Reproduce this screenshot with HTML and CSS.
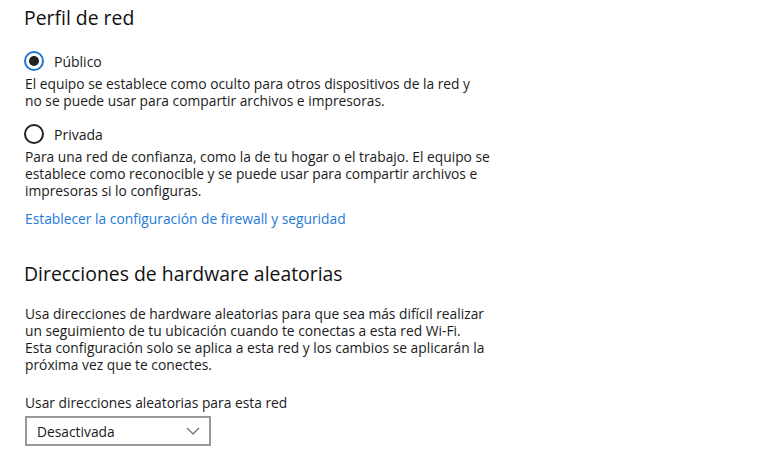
FILE: index.html
```html
<!DOCTYPE html>
<html lang="es">
<head>
<meta charset="utf-8">
<link rel="stylesheet" href="styles.css">
</head>
<body>
<main class="page">
  <h1 class="title">Perfil de red</h1>
  <div class="option">
    <span class="radio checked"><span class="dot"></span></span>
    <span class="opt-label">Público</span>
  </div>
  <p class="desc">El equipo se establece como oculto para otros dispositivos de la red y<br>no se puede usar para compartir archivos e impresoras.</p>
  <div class="option second">
    <span class="radio"></span>
    <span class="opt-label">Privada</span>
  </div>
  <p class="desc">Para una red de confianza, como la de tu hogar o el trabajo. El equipo se<br>establece como reconocible y se puede usar para compartir archivos e<br>impresoras si lo configuras.</p>
  <a class="link" href="#">Establecer la configuración de firewall y seguridad</a>

  <h2 class="title section">Direcciones de hardware aleatorias</h2>
  <p class="desc para">Usa direcciones de hardware aleatorias para que sea más difícil realizar<br>un seguimiento de tu ubicación cuando te conectas a esta red Wi-Fi.<br>Esta configuración solo se aplica a esta red y los cambios se aplicarán la<br>próxima vez que te conectes.</p>
  <div class="field-label">Usar direcciones aleatorias para esta red</div>
  <div class="select">
    <span>Desactivada</span>
    <svg class="chev" width="14" height="8" viewBox="0 0 14 8"><path d="M1 1 L7 7 L13 1" fill="none" stroke="#666" stroke-width="1.2"/></svg>
  </div>
</main>
</body>
</html>
```
FILE: styles.css
```css
html, body {
  margin: 0;
  padding: 0;
  background: #fff;
}
body {
  font-family: "Open Sans", "Noto Sans", sans-serif;
  color: #1b1b1b;
  font-size: 13.8px;
}
.page {
  padding: 4px 0 0 24px;
  display: flex;
  flex-direction: column;
  align-items: flex-start;
}
.title {
  margin: 0;
  font-size: 19.4px;
  font-weight: 400;
  line-height: 28px;
  color: #111;
}
.option {
  display: flex;
  align-items: center;
  gap: 10px;
  margin-top: 19px;
  height: 20px;
}
.option.second {
  margin-top: 15px;
}
.radio {
  width: 20px;
  height: 20px;
  box-sizing: border-box;
  border: 2px solid #222;
  border-radius: 50%;
  display: flex;
  align-items: center;
  justify-content: center;
}
.radio.checked {
  border-color: #1e78d2;
}
.dot {
  width: 10px;
  height: 10px;
  border-radius: 50%;
  background: #222;
}
.opt-label {
  font-size: 14px;
}
.desc {
  margin: 4px 0 0 1px;
  line-height: 17px;
}
.link {
  margin-top: 11px;
  line-height: 17px;
  color: #1f7bd7;
  text-decoration: none;
  margin-left: 1px;
}
.section {
  margin-top: 33px;
}
.para {
  margin-top: 17px;
}
.field-label {
  margin: 21px 0 0 1px;
  line-height: 17px;
}
.select {
  margin-top: 5px;
  margin-left: 1px;
  width: 186px;
  height: 30px;
  box-sizing: border-box;
  border: 2px solid #999;
  display: flex;
  align-items: center;
  justify-content: space-between;
  padding: 0 9px 0 10px;
}
.chev {
  display: block;
}
```
